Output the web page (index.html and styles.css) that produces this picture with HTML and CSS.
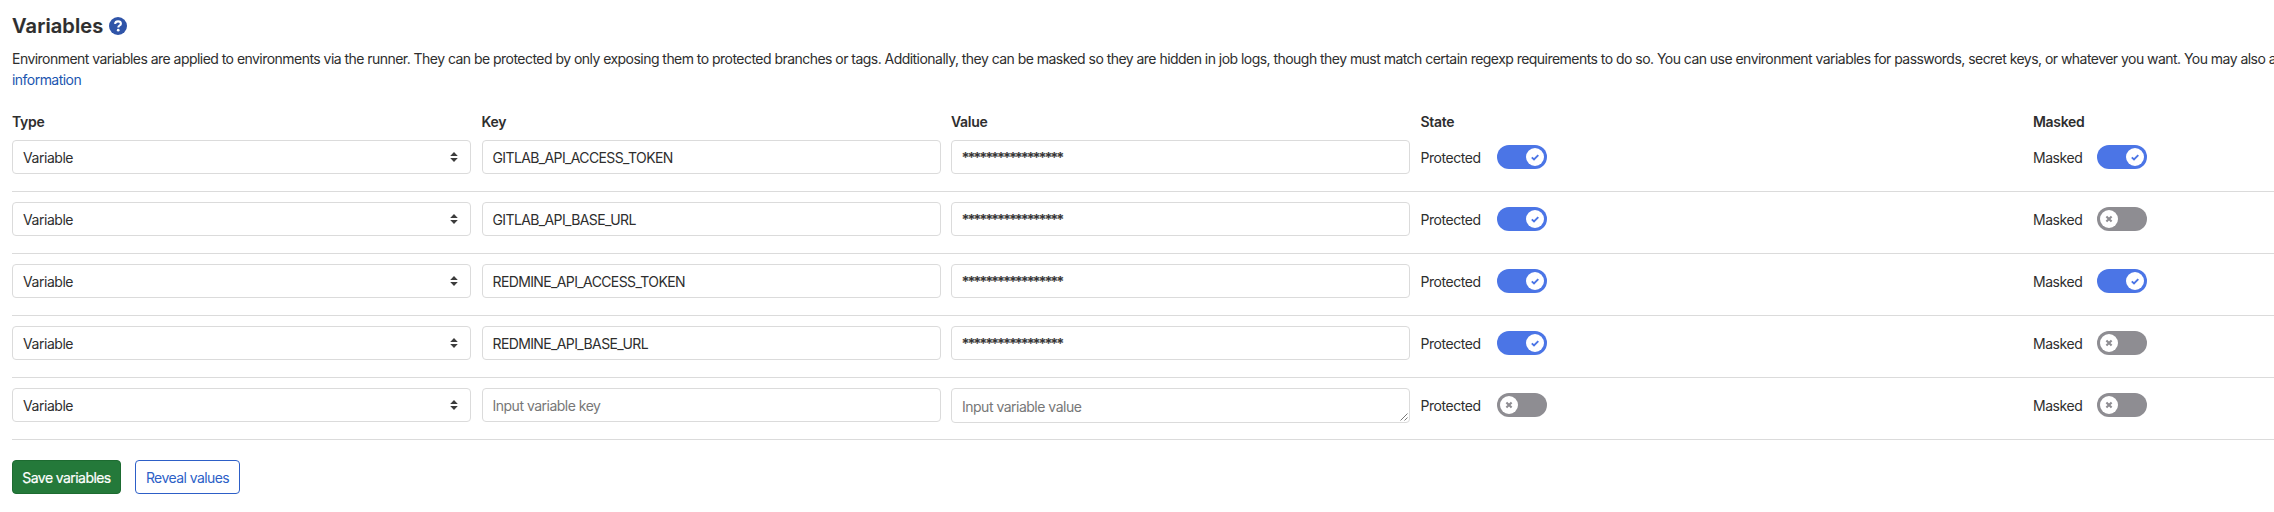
FILE: index.html
```
<!DOCTYPE html>
<html lang="en">
<head>
<meta charset="utf-8">
<title>Variables</title>
<link rel="stylesheet" href="styles.css">
</head>
<body>
<svg width="0" height="0" class="defs">
  <symbol id="arrows" viewBox="0 0 8 10"><path d="M4 0L7.800 4H.2zM4 10L.2 6h7.600z"/></symbol>
  <symbol id="check" viewBox="0 0 18 18"><path d="M5.8 9.4L8 11.5L12.3 7.1" fill="none" stroke="currentColor" stroke-width="1.9"/></symbol>
  <symbol id="cross" viewBox="0 0 18 18"><path d="M6.4 6.4l5.2 5.2M11.6 6.4l-5.2 5.2" fill="none" stroke="currentColor" stroke-width="2.1"/></symbol>
</svg>
<main class="page">
  <h4 class="title"><span>Variables</span>
    <svg class="help" viewBox="0 0 18 18"><circle cx="9" cy="9" r="9"/><path d="M6 6.9C6.3 5.2 7.4 4.4 9 4.4c1.700 0 2.900.9 2.900 2.300C11.900 8.500 9.300 8.500 9.300 10.400" fill="none" stroke="#fff" stroke-width="2.100"/><circle cx="9.200" cy="13.200" r="1.350" fill="#fff"/></svg>
  </h4>
  <p class="description">Environment variables are applied to environments via the runner. They can be protected by only exposing them to protected branches or tags. Additionally, they can be masked so they are hidden in job logs, though they must match certain regexp requirements to do so. You can use environment variables for passwords, secret keys, or whatever you want. You may also a<br><a class="link">information</a></p>
  <div class="row head"><b>Type</b><b>Key</b><b>Value</b><b>State</b><b>Masked</b></div>
  <div class="row">
    <div class="field">Variable<svg class="arrows"><use href="#arrows"/></svg></div>
    <div class="field key">GITLAB_API_ACCESS_TOKEN</div>
    <div class="field stars">*****************</div>
    <div class="state"><span class="protected">Protected</span><span class="toggle on"><svg class="knob"><use href="#check"/></svg></span></div>
    <div class="state"><span class="masked">Masked</span><span class="toggle on"><svg class="knob"><use href="#check"/></svg></span></div>
  </div>
  <div class="row">
    <div class="field">Variable<svg class="arrows"><use href="#arrows"/></svg></div>
    <div class="field key">GITLAB_API_BASE_URL</div>
    <div class="field stars">*****************</div>
    <div class="state"><span class="protected">Protected</span><span class="toggle on"><svg class="knob"><use href="#check"/></svg></span></div>
    <div class="state"><span class="masked">Masked</span><span class="toggle"><svg class="knob"><use href="#cross"/></svg></span></div>
  </div>
  <div class="row">
    <div class="field">Variable<svg class="arrows"><use href="#arrows"/></svg></div>
    <div class="field key">REDMINE_API_ACCESS_TOKEN</div>
    <div class="field stars">*****************</div>
    <div class="state"><span class="protected">Protected</span><span class="toggle on"><svg class="knob"><use href="#check"/></svg></span></div>
    <div class="state"><span class="masked">Masked</span><span class="toggle on"><svg class="knob"><use href="#check"/></svg></span></div>
  </div>
  <div class="row">
    <div class="field">Variable<svg class="arrows"><use href="#arrows"/></svg></div>
    <div class="field key">REDMINE_API_BASE_URL</div>
    <div class="field stars">*****************</div>
    <div class="state"><span class="protected">Protected</span><span class="toggle on"><svg class="knob"><use href="#check"/></svg></span></div>
    <div class="state"><span class="masked">Masked</span><span class="toggle"><svg class="knob"><use href="#cross"/></svg></span></div>
  </div>
  <div class="row">
    <div class="field">Variable<svg class="arrows"><use href="#arrows"/></svg></div>
    <div class="field empty">Input variable key</div>
    <div class="field empty area">Input variable value<svg class="grip" viewBox="0 0 8 8"><path d="M.5 7.500l7-7M4.500 7.500l3-3"/></svg></div>
    <div class="state"><span class="protected">Protected</span><span class="toggle"><svg class="knob"><use href="#cross"/></svg></span></div>
    <div class="state"><span class="masked">Masked</span><span class="toggle"><svg class="knob"><use href="#cross"/></svg></span></div>
  </div>
  <div class="actions"><button class="btn save">Save variables</button><button class="btn reveal">Reveal values</button></div>
</main>
</body>
</html>
```
FILE: styles.css
```
* { box-sizing: border-box; }
body { margin: 0; background: #fff; color: #2e2e2e; font: 14px/21px Inter, "Liberation Sans", sans-serif; letter-spacing: -0.45px; overflow: hidden; }
.defs { display: block; height: 0; }
.page { padding: 13px 0 0 12px; }
.title { display: flex; align-items: center; gap: 6px; height: 26px; margin: 0; font-size: 20px; font-weight: 600; letter-spacing: 0.12px; -webkit-text-stroke: .2px; }
.title .help { -webkit-text-stroke: 0; }
.help { width: 18px; height: 18px; fill: #2f54a8; }
.description { margin: 9px 0 0; white-space: nowrap; letter-spacing: -0.537px; }
.link { color: #1b56b0; }
.row { display: grid; grid-template-columns: 459px 459px 459px 602px 1fr; column-gap: 10.500px; height: 62px; padding-top: 10px; border-bottom: 1px solid #dbdbdb; align-items: start; }
.row.head { height: 40px; padding-top: 21px; border: 0; }
.row.head b { font-weight: 600; letter-spacing: -0.3px; }
.field { position: relative; display: flex; align-items: center; justify-content: space-between; height: 34px; padding: 1px 12px 0 10px; border: 1px solid #dbdbdb; border-radius: 4px; }
.key { letter-spacing: -0.620px; }
.stars { letter-spacing: -1.090px; -webkit-text-stroke: .25px; }
.arrows { width: 8px; height: 10px; fill: #3c3c3c; margin-top: -2px; }
.empty { color: #777; letter-spacing: -0.500px; }
.area { height: 35px; }
.grip { position: absolute; right: 1px; bottom: 1px; width: 8px; height: 8px; fill: none; stroke: #555; stroke-width: .8; }
.state { display: flex; align-items: center; height: 34px; margin-top: 0; }
.protected { width: 76px; padding-top: 1px; }
.masked { width: 64px; padding-top: 1px; }
.toggle { display: flex; width: 50px; height: 24px; padding: 3px; border-radius: 12px; background: #8e8d92; color: #8e8d92; }
.toggle.on { justify-content: flex-end; background: #4b75e6; color: #4b75e6; }
.knob { width: 18px; height: 18px; border-radius: 50%; background: #fff; }
.actions { display: flex; gap: 14px; margin-top: 20px; }
.btn { height: 34px; padding: 0; border: 1px solid; border-radius: 4px; font: inherit; letter-spacing: -0.570px; white-space: nowrap; }
.save { width: 109px; color: #fff; background: #24793a; border-color: #1d6b31; -webkit-text-stroke: .2px; }
.reveal { width: 105px; color: #2d5fc7; background: #fff; border-color: #2d5fc7; }
```
